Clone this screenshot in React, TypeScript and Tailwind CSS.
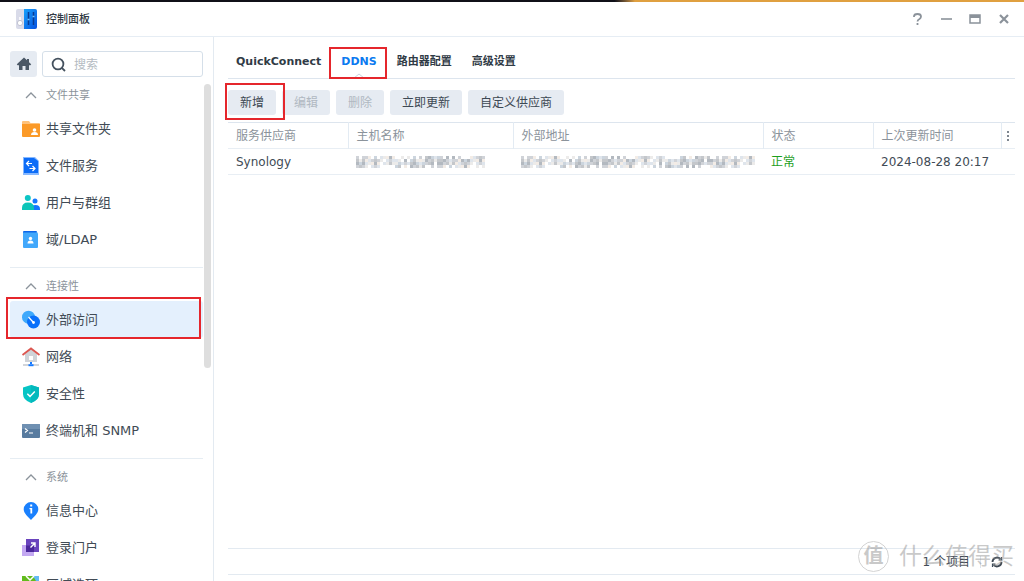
import type { ReactNode } from 'react';
import clsx from 'clsx';

interface NavItem {
  label: string;
  icon: ReactNode;
}

interface NavSection {
  title: string;
  items: NavItem[];
}

const SharedFolderIcon = () => (
  <svg width="20" height="20" viewBox="0 0 20 20" aria-hidden="true">
    <path d="M1 3q0-1 1-1h6l1.500 2H18q1 0 1 1v12H1z" fill="#ffc27a" />
    <path d="M1 5h18v12q0 1-1 1H2q-1 0-1-1z" fill="#fb9a28" />
    <circle cx="13.500" cy="11" r="1.800" fill="#fff" />
    <path d="M10 16q0-3 3.500-3t3.500 3z" fill="#fff" />
  </svg>
);

const FileServiceIcon = () => (
  <svg width="20" height="20" viewBox="0 0 20 20" aria-hidden="true">
    <path d="M2 1h12l4 4v14H2z" fill="#86b8ff" />
    <path d="M3 2h10l4 3v12H3z" fill="#0c6cf7" />
    <path
      d="M5.500 7.500H11M8 5L5.500 7.500 8 10M14 12.500H8.500M11.500 10l2.500 2.500-2.500 2.500"
      fill="none"
      stroke="#fff"
      strokeWidth="1.200"
    />
  </svg>
);

const UsersIcon = () => (
  <svg width="20" height="20" viewBox="0 0 20 20" aria-hidden="true">
    <circle cx="14" cy="8" r="2.500" fill="#1478ff" />
    <path d="M10 17v-1q0-4 4.500-4t4.500 4v1z" fill="#1478ff" />
    <circle cx="6.800" cy="5" r="3" fill="#0cc5c5" />
    <path d="M1 17v-2q0-5.500 6-5.500t6 5.500v2z" fill="#0cc5b8" />
  </svg>
);

const DomainIcon = () => (
  <svg width="20" height="20" viewBox="0 0 20 20" aria-hidden="true">
    <path d="M2 2q0-1 1-1h12q1 0 1 1v2H2z" fill="#0c66e8" />
    <path d="M2 2.500h13V2q2 0 2 2v13q0 1-1 1H3q-1 0-1-1z" fill="#42a8fb" />
    <circle cx="9.500" cy="8.500" r="1.700" fill="#fff" />
    <path d="M6.500 13.500q0-3 3-3t3 3z" fill="#fff" />
  </svg>
);

const ExternalAccessIcon = () => (
  <svg width="20" height="20" viewBox="0 0 20 20" aria-hidden="true">
    <circle cx="7.500" cy="7.200" r="6.500" fill="#3fa9fb" />
    <circle cx="12.500" cy="12" r="6.500" fill="#0a70fa" />
    <path d="M7.500 7l4.500 5" stroke="#fff" strokeWidth="1.200" />
    <circle cx="12.500" cy="12.500" r="1.400" fill="#fff" />
  </svg>
);

const NetworkIcon = () => (
  <svg width="20" height="20" viewBox="0 0 20 20" aria-hidden="true">
    <path d="M4 7l6-5 6 5v8H4z" fill="#cfd3d8" />
    <path d="M8 9h4v4H8z" fill="#fff" />
    <path d="M1.500 8L10 1.500 18.500 8" fill="none" stroke="#dc5650" strokeWidth="1.800" />
    <path d="M2 18h6M12 18h6" stroke="#c3c8ce" strokeWidth="1.400" />
    <path d="M10 15v2" stroke="#1478ff" strokeWidth="2" />
    <path d="M7.500 17.200h5v2h-5z" fill="#1478ff" />
  </svg>
);

const SecurityIcon = () => (
  <svg width="20" height="20" viewBox="0 0 20 20" aria-hidden="true">
    <path d="M10 1l8 2.500V10q0 6-8 9-8-3-8-9V3.500z" fill="#06c4c4" />
    <path d="M10 1l8 2.500V10q0 6-8 9z" fill="#04b9bd" />
    <path d="M6.300 9.800l2.700 2.600 4.800-5" fill="none" stroke="#fff" strokeWidth="1.500" />
  </svg>
);

const TerminalIcon = () => (
  <svg width="20" height="20" viewBox="0 0 20 20" aria-hidden="true">
    <rect x="1" y="3" width="18" height="14" rx="1" fill="#587b9f" />
    <path d="M1 4q0-1 1-1h16q1 0 1 1v4H1z" fill="#6f90b2" />
    <path d="M4 7.500l2.500 2L4 11.500M8 12h4" fill="none" stroke="#fff" strokeWidth="1.200" />
  </svg>
);

const InfoIcon = () => (
  <svg width="20" height="20" viewBox="0 0 20 20" aria-hidden="true">
    <path d="M10 1a7.300 7.300 0 0 1 7.300 7.300c0 4-4.300 7.700-7.300 10.700-3-3-7.300-6.700-7.300-10.700A7.300 7.300 0 0 1 10 1z" fill="#1a80fd" />
    <path d="M9.200 3.500h2v2h-2zM8.500 7h2.700v5.500H9.400V8.300h-.9z" fill="#fff" />
  </svg>
);

const PortalIcon = () => (
  <svg width="20" height="20" viewBox="0 0 20 20" aria-hidden="true">
    <rect x="1" y="7" width="12" height="11" fill="#c3a8f2" />
    <rect x="5" y="1" width="13" height="13" fill="#6a44bd" />
    <path d="M5 7.500h8V14H5z" fill="#4a279a" />
    <path d="M9.500 9.500l4-4M10 5h4v4" fill="none" stroke="#fff" strokeWidth="1.400" />
  </svg>
);

const RegionIcon = () => (
  <svg width="20" height="20" viewBox="0 0 20 20" aria-hidden="true">
    <rect x="1" y="1" width="17" height="17" fill="#62bb1d" />
    <path d="M12 1h6v10z" fill="#63baf5" />
    <path d="M5 1l4 4 4-4" fill="none" stroke="#fff" strokeWidth="1.500" />
  </svg>
);

const SECTIONS: NavSection[] = [
  {
    title: '文件共享',
    items: [
      { label: '共享文件夹', icon: <SharedFolderIcon /> },
      { label: '文件服务', icon: <FileServiceIcon /> },
      { label: '用户与群组', icon: <UsersIcon /> },
      { label: '域/LDAP', icon: <DomainIcon /> },
    ],
  },
  {
    title: '连接性',
    items: [
      { label: '外部访问', icon: <ExternalAccessIcon /> },
      { label: '网络', icon: <NetworkIcon /> },
      { label: '安全性', icon: <SecurityIcon /> },
      { label: '终端机和 SNMP', icon: <TerminalIcon /> },
    ],
  },
  {
    title: '系统',
    items: [
      { label: '信息中心', icon: <InfoIcon /> },
      { label: '登录门户', icon: <PortalIcon /> },
      { label: '区域选项', icon: <RegionIcon /> },
    ],
  },
];

const TABS = ['QuickConnect', 'DDNS', '路由器配置', '高级设置'];

const ACTIONS = [
  { label: '新增', disabled: false },
  { label: '编辑', disabled: true },
  { label: '删除', disabled: true },
  { label: '立即更新', disabled: false },
  { label: '自定义供应商', disabled: false },
];

const MOSAIC_COLORS = ['#d0d3d8', '#ecebea', '#b3b9c0', '#dfe5ec', '#c4c7cb', '#f3ece6', '#ccd5de'];

// Masked value, drawn as a strip of coloured cells
function Mosaic({ columns }: { columns: number }) {
  const cells: ReactNode[] = [];
  for (let x = 0; x < columns; x++) {
    for (let y = 0; y < 4; y++) {
      const seed = (x * 7 + y * 11 + ((x * x) % 5) * 3) % 13;
      const edge = y === 0 || y === 3;
      if (seed > (edge ? 7 : 11)) continue;
      cells.push(
        <rect
          key={`${x}-${y}`}
          x={x * 3}
          y={y * 3}
          width="3"
          height="3"
          fill={MOSAIC_COLORS[seed % MOSAIC_COLORS.length]}
        />
      );
    }
  }
  return (
    <svg width={columns * 3} height="12" role="img" aria-label="已隐藏">
      {cells}
    </svg>
  );
}

function Highlight({ className }: { className: string }) {
  return (
    <span
      className={clsx('pointer-events-none absolute z-10 border-2 border-[#e5262c]', className)}
    />
  );
}

function TitleBar() {
  return (
    <header className="flex h-[35px] shrink-0 items-center border-b border-[#e6edf4] pl-[15px] pr-3">
      <svg width="23" height="22" viewBox="0 0 23 22" aria-hidden="true">
        <defs>
          <linearGradient id="panelBlue" x1="0" y1="0" x2="1" y2="1">
            <stop offset="0" stopColor="#17a1fb" />
            <stop offset="1" stopColor="#0751e0" />
          </linearGradient>
        </defs>
        <rect x="1" y="1" width="21" height="20" rx="2" fill="#d9dbe9" />
        <path d="M9 1h11q2 0 2 2v16q0 2-2 2H9z" fill="url(#panelBlue)" />
        <path d="M13.500 4v13M18.500 4v13" stroke="#083b92" strokeWidth="1.500" />
        <path d="M12.500 11.500h2M17.500 8.500h2" stroke="#6fc4ff" strokeWidth="1.500" />
        <circle cx="5" cy="15" r="2.600" fill="#fff" stroke="#b5b8c8" strokeWidth=".8" />
        <path d="M5 9v3" stroke="#fff" strokeWidth="1.500" />
      </svg>
      <h1 className="ml-2 pt-[2px] text-[11px] font-medium text-[#2f3944]">控制面板</h1>
      <div className="ml-auto flex items-center gap-[13px] text-[#8b929a]">
        <button aria-label="帮助" className="flex size-4 items-center justify-center">
          <svg width="16" height="16" viewBox="0 0 16 16" fill="none" stroke="currentColor" strokeWidth="1.800">
            <path d="M5 6V5.500Q5 3 8.500 3t3.500 2.500Q12 7 10.500 8 8.500 9 8.500 10.500" />
            <path d="M8.500 12v2" />
          </svg>
        </button>
        <button aria-label="最小化" className="flex size-4 items-center justify-center">
          <svg width="16" height="16" viewBox="0 0 16 16">
            <path d="M3 8h11" stroke="currentColor" strokeWidth="1.600" />
          </svg>
        </button>
        <button aria-label="最大化" className="flex size-4 items-center justify-center">
          <svg width="16" height="16" viewBox="0 0 16 16">
            <path d="M3 4h10v8H3z" fill="none" stroke="currentColor" strokeWidth="1.500" />
            <path d="M3 4h10v3H3z" fill="currentColor" />
          </svg>
        </button>
        <button aria-label="关闭" className="flex size-4 items-center justify-center">
          <svg width="16" height="16" viewBox="0 0 16 16">
            <path d="M4 4l8 8M12 4l-8 8" stroke="currentColor" strokeWidth="2.200" />
          </svg>
        </button>
      </div>
    </header>
  );
}

function Sidebar() {
  return (
    <aside className="relative w-[214px] shrink-0 overflow-hidden border-r border-[#e3eaf1] pl-[10px] pr-[10px] pt-[14px]">
      <div className="mb-[3px] flex gap-[5px]">
        <button
          aria-label="主页"
          className="flex h-[26px] w-[27px] shrink-0 items-center justify-center rounded-[3px] bg-[#e6ebf2]"
        >
          <svg width="16" height="16" viewBox="0 0 16 16" fill="#4b5866">
            <path d="M8 1.500L.8 8.200l.8 1H3V14h3.500v-4h3v4H13V9.200h1.400l.8-1-2.200-2V3h-2v1.300z" />
          </svg>
        </button>
        <label className="flex h-[26px] min-w-0 flex-1 items-center gap-2 rounded-[3px] border border-[#d5dfe9] pl-2">
          <svg width="15" height="15" viewBox="0 0 15 15" fill="none" stroke="#44515e" strokeWidth="1.800" className="shrink-0">
            <circle cx="7" cy="7" r="5.400" />
            <path d="M10.800 10.800L14 14" />
          </svg>
          <input
            type="text"
            aria-label="搜索"
            placeholder="搜索"
            className="w-full min-w-0 pt-[2px] text-[12px] outline-none placeholder:text-[#b4bbc2]"
          />
        </label>
      </div>
      <nav className="flex flex-col">
        {SECTIONS.map((section, index) => (
          <section
            key={section.title}
            className={clsx(index > 0 && 'mt-[9px] border-t border-[#e6edf3] pt-[3px]')}
          >
            <button className="flex h-[30px] w-full items-center gap-[5px] pl-[11px] pt-[2px] text-[11px] text-[#8b939b]">
              <svg width="20" height="20" viewBox="0 0 20 20" aria-hidden="true">
                <path d="M5 12l5-5 5 5" fill="none" stroke="#8b939b" strokeWidth="1.300" />
              </svg>
              {section.title}
            </button>
            <ul>
              {section.items.map((item) => {
                const active = item.label === '外部访问';
                return (
                  <li key={item.label} className="relative">
                    <a
                      href="#"
                      className={clsx(
                        'flex h-[37px] items-center gap-[5px] rounded-[3px] pl-[11px] text-[13px] text-[#414b55]',
                        active && 'bg-[#e4f0fd]'
                      )}
                    >
                      {item.icon}
                      {item.label}
                    </a>
                    {active && <Highlight className="-bottom-px -left-1 -top-1 right-[2px]" />}
                  </li>
                );
              })}
            </ul>
          </section>
        ))}
      </nav>
      <span className="absolute right-[2px] top-[47px] h-[284px] w-[7px] rounded-full bg-[#dedede]" />
    </aside>
  );
}

function Tabs() {
  return (
    <div role="tablist" className="flex h-[42px] items-center gap-[20px] border-b border-[#dde5ee] pl-2 pt-[10px] text-[11px] font-bold text-[#303b46]">
      {TABS.map((tab) => {
        const active = tab === 'DDNS';
        return (
          <button
            key={tab}
            role="tab"
            aria-selected={active}
            className={clsx('relative h-full whitespace-nowrap', active && 'text-[#0b7af0]')}
          >
            {tab}
            {active && (
              <>
                <svg width="10" height="5" viewBox="0 0 10 5" className="absolute bottom-0 left-1/2 -translate-x-1/2">
                  <path d="M0 5l5-4 5 4" fill="#fff" stroke="#c7d3df" />
                </svg>
                <Highlight className="-bottom-px -left-3 -right-[10px] top-0" />
              </>
            )}
          </button>
        );
      })}
    </div>
  );
}

function RecordTable() {
  return (
    <table className="w-full table-fixed border-t border-[#dde5ee] text-left text-[12px]">
      <colgroup>
        <col className="w-[120px]" />
        <col className="w-[165px]" />
        <col />
        <col className="w-[110px]" />
        <col className="w-[128px]" />
        <col className="w-[14px]" />
      </colgroup>
      <thead>
        <tr className="h-[26px] border-b border-[#e8eef4] text-[#8b939b]">
          {['服务供应商', '主机名称', '外部地址', '状态', '上次更新时间'].map((name) => (
            <th key={name} className="border-r border-[#e3ebf3] pl-2 font-normal">
              {name}
            </th>
          ))}
          <th>
            <button aria-label="列选项" className="flex w-full justify-center">
              <svg width="4" height="12" viewBox="0 0 4 12" fill="#7f8790">
                <path d="M1 1h2v2H1zM1 5h2v2H1zM1 9h2v2H1z" />
              </svg>
            </button>
          </th>
        </tr>
      </thead>
      <tbody>
        <tr className="h-[26px] border-b border-[#e8eef4] text-[#414b55]">
          <td className="pl-2">Synology</td>
          <td className="pl-2">
            <Mosaic columns={43} />
          </td>
          <td className="pl-2">
            <Mosaic columns={78} />
          </td>
          <td className="pl-2 text-[#1ea01e]">正常</td>
          <td className="whitespace-nowrap pl-2" colSpan={2}>
            2024-08-28 20:17
          </td>
        </tr>
      </tbody>
    </table>
  );
}

function Watermark() {
  return (
    <div className="pointer-events-none absolute bottom-[9px] right-[10px] flex items-center gap-[10px] text-[#8a8a8a] opacity-45">
      <span className="flex size-[31px] items-center justify-center rounded-full border border-[#a0a0a0] text-[20px] font-bold">
        值
      </span>
      <span className="text-[23px] leading-8">什么值得买</span>
    </div>
  );
}

function App() {
  return (
    <div className="relative flex h-screen flex-col overflow-hidden bg-white font-['DejaVu_Sans','Noto_Sans_CJK_SC',sans-serif]">
      <div className="h-[2px] shrink-0 bg-linear-to-r from-[#101018] from-60% to-[#e0a040] to-62%" />
      <TitleBar />
      <div className="flex min-h-0 flex-1">
        <Sidebar />
        <main className="flex min-w-0 flex-1 flex-col pb-[6px] pl-[14px] pr-[9px]">
          <Tabs />
          <div className="flex gap-[6px] pb-[7px] pt-[11px]">
            {ACTIONS.map((action) => (
              <div key={action.label} className="relative">
                <button
                  disabled={action.disabled}
                  className="block h-[25px] whitespace-nowrap rounded-[3px] bg-[#e6ebf2] px-3 text-[12px] text-[#3d4853] disabled:text-[#b0b8c1]"
                >
                  {action.label}
                </button>
                {action.label === '新增' && (
                  <Highlight className="-bottom-[5px] -left-[3px] -right-[9px] -top-[7px]" />
                )}
              </div>
            ))}
          </div>
          <RecordTable />
          <footer className="mt-auto flex h-[27px] items-center justify-end gap-[10px] border-y border-[#e3eaf1] pr-3 text-[12px] text-[#414b55]">
            <span>1 个项目</span>
            <span className="h-3 w-px bg-[#dde5ee]" />
            <button aria-label="刷新">
              <svg width="12" height="12" viewBox="0 0 12 12" fill="none" stroke="#3d4853" strokeWidth="1.800">
                <path d="M1.500 6A4.500 4.500 0 0 1 9.500 3.200M10.500 6a4.500 4.500 0 0 1-8 2.800" />
                <path d="M10.500 1v3h-3M1.500 11V8h3" strokeWidth="1.200" />
              </svg>
            </button>
          </footer>
        </main>
      </div>
      <Watermark />
    </div>
  );
}

export default App;
